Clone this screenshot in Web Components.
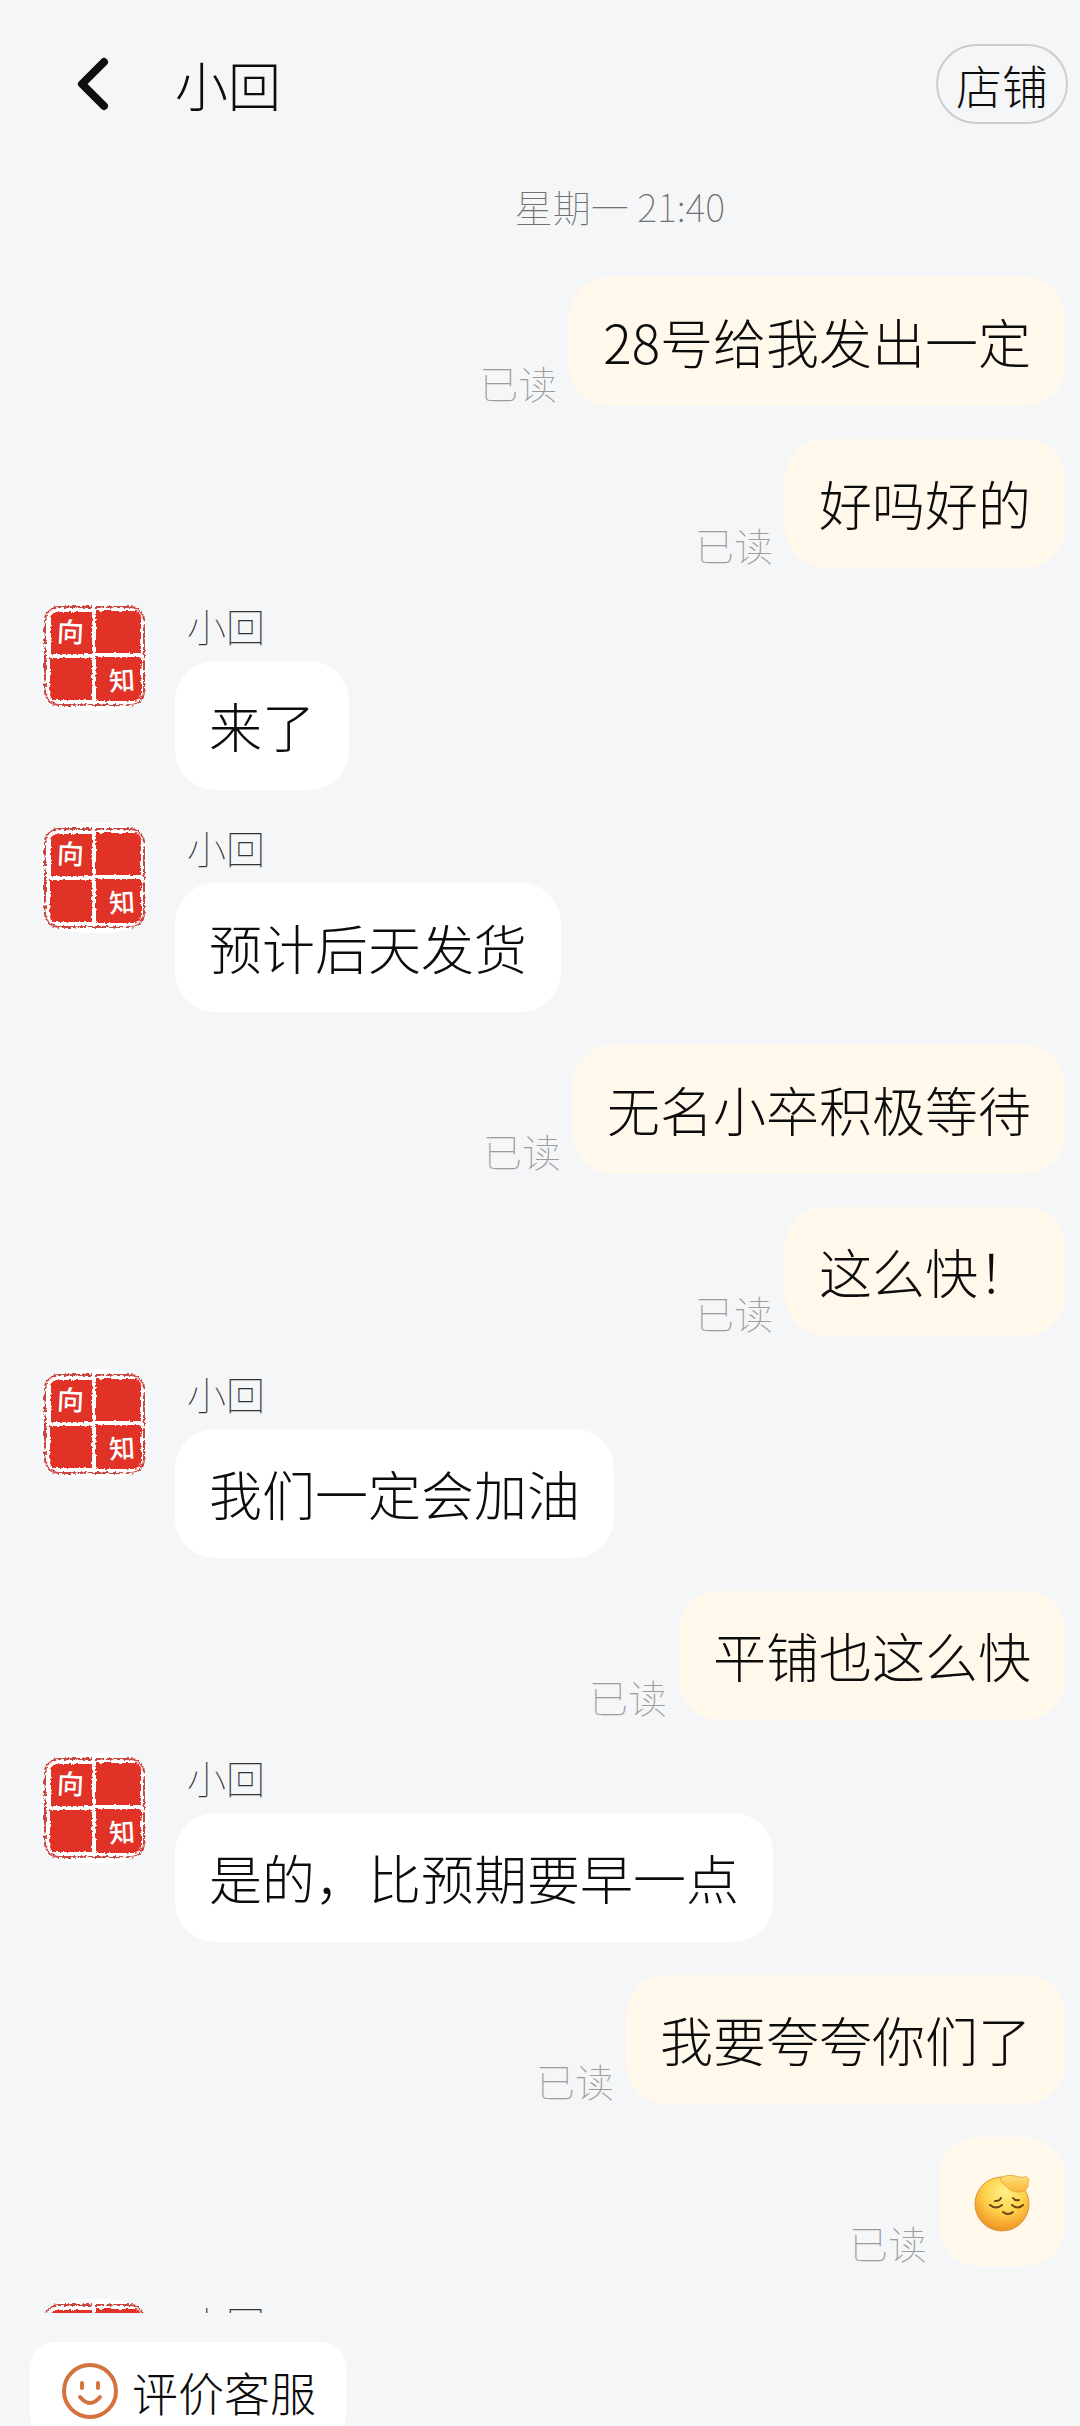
<!DOCTYPE html>
<html lang="zh-CN">
<head>
<meta charset="utf-8">
<meta name="viewport" content="width=device-width, initial-scale=1">
<title>小回</title>
<style>
  body {
    margin: 0;
    background: #f4f6f8;
    color: #0c0c0c;
    font-family: "Noto Sans CJK SC", sans-serif;
    font-weight: 300;
  }
</style>
</head>
<body>
<chat-app>
  <chat-header slot="header">小回<span slot="action">店铺</span></chat-header>
  <chat-time>星期一 21:40</chat-time>
  <chat-message own>28号给我发出一定</chat-message>
  <chat-message own>好吗好的</chat-message>
  <chat-message name="小回">来了</chat-message>
  <chat-message name="小回">预计后天发货</chat-message>
  <chat-message own>无名小卒积极等待</chat-message>
  <chat-message own>这么快！</chat-message>
  <chat-message name="小回">我们一定会加油</chat-message>
  <chat-message own>平铺也这么快</chat-message>
  <chat-message name="小回">是的，比预期要早一点</chat-message>
  <chat-message own>我要夸夸你们了</chat-message>
  <chat-message own><pat-emoji></pat-emoji></chat-message>
  <chat-message name="小回"></chat-message>
  <chat-rate slot="footer">评价客服</chat-rate>
</chat-app>

<script>
const makeTemplate = (html) => {
    const template = document.createElement('template');
    template.innerHTML = html;
    return template;
};

class BaseElement extends HTMLElement {
    constructor() {
        super();
        this.attachShadow({mode: 'open'})
            .appendChild(this.constructor.template.content.cloneNode(true));
    }
}


class ChatApp extends BaseElement {
    static template = makeTemplate(`
      <style>
        :host {
            display: flex;
            flex-direction: column;
            height: 100vh;
            overflow: hidden;
        }

        main {
            flex: 1;
            min-height: 0;
            display: flex;
            flex-direction: column;
            gap: 33px;
            padding: 12px 15px 0 40px;
            overflow: hidden;
        }
      </style>
      <slot name="header"></slot>
      <main><slot></slot></main>
      <slot name="footer"></slot>
    `);
}


class ChatHeader extends BaseElement {
    static template = makeTemplate(`
      <style>
        :host {
            display: flex;
            align-items: center;
            flex: none;
            height: 168px;
            padding: 0 12px 0 68px;
            box-sizing: border-box;
        }

        button {
            font: inherit;
            color: inherit;
            background: transparent;
            border: none;
            padding: 0;
            cursor: pointer;
        }

        #back {
            width: 48px;
            height: 60px;
        }

        #back svg { display: block; }

        h1 {
            flex: 1;
            margin: 0 0 0 59px;
            font-size: 53px;
            line-height: 80px;
            font-weight: inherit;
        }

        #action {
            height: 80px;
            padding: 0 18px;
            border: 2px solid #cdcdcf;
            border-radius: 40px;
            font-size: 46px;
            line-height: 72px;
        }
      </style>
      <button id="back" aria-label="返回">
        <svg width="48" height="60" viewBox="0 0 48 60" fill="none" stroke="#0f0f0f" stroke-width="8" stroke-linecap="round" stroke-linejoin="round"><path d="M36 8 14 30l22 22"/></svg>
      </button>
      <h1><slot></slot></h1>
      <button id="action"><slot name="action"></slot></button>
    `);
}


class ChatTime extends BaseElement {
    static template = makeTemplate(`
      <style>
        :host {
            display: block;
            flex: none;
            margin: 0 0 12px 135px;
            text-align: center;
            font-size: 38px;
            font-weight: 100;
            line-height: 52px;
            color: #707070;
        }
      </style>
      <slot></slot>
    `);
}


// red seal stamp, edges are roughened with a displacement filter
class SealAvatar extends BaseElement {
    static template = makeTemplate(`
      <style>
        :host { display: block; width: 110px; height: 110px; }
        svg { display: block; }
        text {
            font-family: "Noto Sans CJK SC", sans-serif;
            font-weight: 500;
            fill: #fff;
        }
      </style>
      <svg width="110" height="110" viewBox="0 0 110 110">
        <filter id="rough" x="-5%" y="-5%" width="110%" height="110%">
          <feTurbulence type="fractalNoise" baseFrequency=".35" numOctaves="2" seed="4"/>
          <feDisplacementMap in="SourceGraphic" scale="4" xChannelSelector="R" yChannelSelector="G"/>
        </filter>
        <path fill="#fff" d="M55 0C95 0 107 6 108 40c1 10 1 20 0 30-1 34-13 40-53 40S2 104 1 70C0 60 0 50 1 40 2 6 15 0 55 0Z"/>
        <rect x="5" y="6" width="99" height="98" rx="14" fill="none" stroke="#c9473f" stroke-width="2" stroke-dasharray="34 2 9 2 40 1 5 3" filter="url(#rough)"/>
        <path fill="#e03326" filter="url(#rough)" d="M17 11h35v42H11V17q0-6 6-6ZM56 10h38q7 0 7 8v34H56ZM10 57h42v42H15q-5 0-5-6ZM56 56h45v37q0 7-7 7H56Z"/>
        <text x="17" y="41" font-size="27" transform="rotate(3 30 32)">向</text>
        <text x="69" y="89" font-size="26" transform="rotate(-3 82 80)">知</text>
      </svg>
    `);
}


class PatEmoji extends BaseElement {
    static template = makeTemplate(`
      <style>
        :host { display: block; width: 58px; height: 61px; }
        svg { display: block; }
      </style>
      <svg width="58" height="61" viewBox="0 0 58 61" role="img" aria-label="摸头">
        <defs>
          <radialGradient id="face" cx=".55" cy=".28" r=".75">
            <stop offset="0" stop-color="#fff08a"/>
            <stop offset=".5" stop-color="#fdd24a"/>
            <stop offset=".85" stop-color="#f5a02c"/>
            <stop offset="1" stop-color="#e2892a"/>
          </radialGradient>
          <linearGradient id="hand" x1="0" y1="0" x2="0" y2="1">
            <stop offset="0" stop-color="#ffe27a"/>
            <stop offset="1" stop-color="#f8b637"/>
          </linearGradient>
        </defs>
        <circle cx="29" cy="33" r="27" fill="url(#face)" stroke="#d99a35"/>
        <path fill="url(#hand)" stroke="#eea93a" d="M27 8c4-4 10-4 15-3 4 1 7 2 9 1 4-1 6 3 4 6 1 5-3 9-9 9-7 0-11-3-14-7-2-2-4-3-5-6Z"/>
        <g fill="none" stroke="#6b4510" stroke-width="2" stroke-linecap="round">
          <path d="M22 30q5 0 6-3M40 27q2 3 6 2M17 34q6 5 12 0M39 34q6 5 11 0M30 41q5 4 10 0"/>
        </g>
      </svg>
    `);
}


class ChatMessage extends BaseElement {
    static template = makeTemplate(`
      <style>
        :host {
            display: flex;
            flex: none;
            align-items: flex-start;
            gap: 25px;
        }

        :host([own]) {
            justify-content: flex-end;
            align-items: flex-end;
            gap: 12px;
        }

        :host([own]) seal-avatar,
        :host([own]) #name,
        :host(:not([own])) #read { display: none; }

        #name {
            padding-left: 12px;
            font-size: 39px;
            font-weight: 100;
            line-height: 48px;
            margin-bottom: 12px;
            color: #333;
        }

        #read {
            font-size: 39px;
            font-weight: 100;
            line-height: 48px;
            color: #9c9c9c;
        }

        #bubble {
            width: fit-content;
            padding: 34px;
            border-radius: 40px;
            background: #fff;
            font-size: 53px;
            line-height: 61px;
        }

        :host([own]) #bubble { background: #fff8eb; }
      </style>
      <seal-avatar></seal-avatar>
      <span id="read">已读</span>
      <div>
        <div id="name"></div>
        <div id="bubble"><slot></slot></div>
      </div>
    `);

    connectedCallback() {
        this.shadowRoot.getElementById('name').textContent = this.getAttribute('name') || '';
    }
}


class ChatRate extends BaseElement {
    static template = makeTemplate(`
      <style>
        :host {
            display: block;
            flex: none;
            height: 113px;
            padding: 29px 30px 0;
            box-sizing: border-box;
            overflow: hidden;
        }

        button {
            display: flex;
            align-items: center;
            gap: 12px;
            height: 98px;
            padding: 0 30px 0 32px;
            border: none;
            border-radius: 24px;
            background: #fff;
            color: inherit;
            font: inherit;
            font-size: 46px;
            cursor: pointer;
        }
      </style>
      <button>
        <svg width="58" height="58" viewBox="0 0 58 58" fill="none" stroke="#d4733f" stroke-width="4" stroke-linecap="round"><circle cx="28" cy="29" r="26"/><path d="M20 21v5M36 21v5M18 35q10 12 20 0"/></svg>
        <slot></slot>
      </button>
    `);
}

customElements.define('seal-avatar', SealAvatar);
customElements.define('pat-emoji', PatEmoji);
customElements.define('chat-time', ChatTime);
customElements.define('chat-message', ChatMessage);
customElements.define('chat-header', ChatHeader);
customElements.define('chat-rate', ChatRate);
customElements.define('chat-app', ChatApp);
</script>
</body>
</html>
